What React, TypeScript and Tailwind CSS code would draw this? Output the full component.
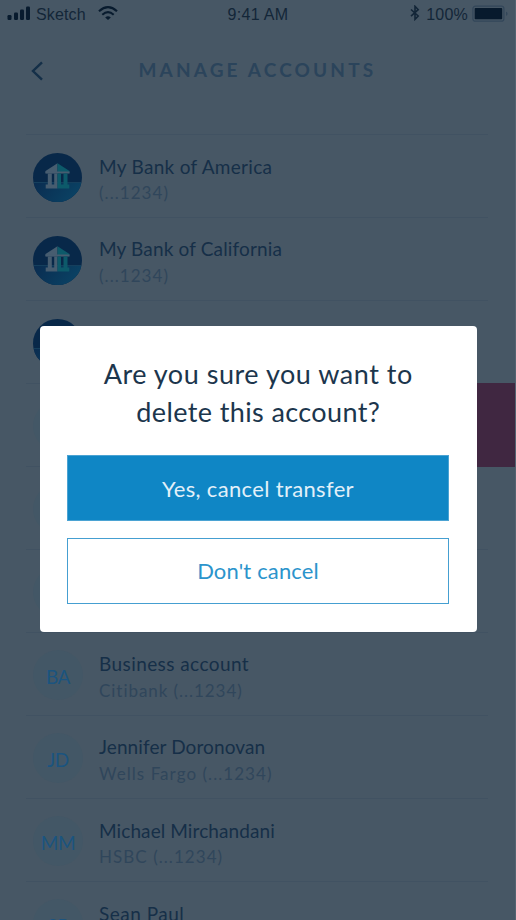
type Account = {
  id: string;
  bank?: boolean;
  initials?: string;
  name?: string;
  detail?: string;
  nameTracking?: string;
  detailTracking?: string;
  even?: boolean;
};

const accounts: Account[] = [
  { id: "america", bank: true, name: "My Bank of America", detail: "(...1234)", nameTracking: "tracking-[0.3px]", detailTracking: "tracking-[1.05px]" },
  { id: "california", bank: true, name: "My Bank of California", detail: "(...1234)", nameTracking: "tracking-[0.15px]", detailTracking: "tracking-[1.05px]", even: true },
  { id: "chase", bank: true, name: "My Chase", nameTracking: "tracking-[0.3px]" },
  { id: "row-4" },
  { id: "row-5" },
  { id: "row-6" },
  { id: "business", initials: "BA", name: "Business account", detail: "Citibank (...1234)", nameTracking: "tracking-[0.42px]", detailTracking: "tracking-[0.95px]", even: true },
  { id: "jennifer", initials: "JD", name: "Jennifer Doronovan", detail: "Wells Fargo (...1234)", nameTracking: "tracking-[0.1px]", detailTracking: "tracking-[1.05px]", even: true },
  { id: "michael", initials: "MM", name: "Michael Mirchandani", detail: "HSBC (...1234)", nameTracking: "tracking-[0.09px]", detailTracking: "tracking-[1.05px]" },
  { id: "sean", initials: "SP", name: "Sean Paul", nameTracking: "tracking-[0.5px]" },
];

function BankIcon() {
  return (
    <svg className="mt-[18px] size-[49px] shrink-0" viewBox="0 0 49 49">
      <defs>
        <clipPath id="disc"><circle cx="24.5" cy="24.5" r="24.5" /></clipPath>
        <linearGradient id="ground" x1="0" x2="1" y1="0" y2="0.3">
          <stop offset="0" stopColor="#0a2c50" />
          <stop offset="1" stopColor="#0a4264" />
        </linearGradient>
      </defs>
      <g clipPath="url(#disc)">
        <rect width="49" height="49" fill="#082849" />
        <rect y="30" width="49" height="19" fill="url(#ground)" />
        <rect y="29.3" width="49" height="0.7" fill="#1c4a66" />
        <path d="M24.5 10.3 12.5 18v2.3h12z" fill="#475d70" />
        <path d="M24.5 10.3 36.5 18v2.3h-12z" fill="#0d5a6a" />
        <path d="M12.5 18.4h24v2.2h-24z" fill="#475d70" />
        <path d="M14.8 20.6h4v10.9h-4zM21.2 20.6h3.3v10.9h-3.3zM12.7 31.4h11.8v4.2H12.7z" fill="#475d70" />
        <path d="M24.5 20.6h3.5v10.9h-3.5zM30.5 20.6h4v10.9h-4zM24.5 31.4h11.8v4.2H24.5z" fill="#0d5a6a" />
      </g>
    </svg>
  );
}

function AccountRow({ account }: { account: Account }) {
  return (
    <li className="flex h-[83px] shrink-0 border-t border-[#415262]">
      <div className="flex w-[73px] shrink-0 pl-[7px]">
        {account.bank ? (
          <BankIcon />
        ) : (
          <div className="mt-[17px] flex size-[50px] justify-center rounded-full bg-[#435766] pt-[15px] text-[19px] leading-6 tracking-[-0.4px] text-[#1b547f]">
            {account.initials}
          </div>
        )}
      </div>
      <div className={account.even ? "pt-[19px]" : "pt-[20px]"}>
        <div className={`h-6 text-[19px] leading-6 whitespace-nowrap text-[#162f48] ${account.nameTracking ?? ""}`}>{account.name}</div>
        {account.detail && (
          <div className={`text-[17px] leading-6 whitespace-nowrap text-[#30465b] ${account.detailTracking ?? ""} ${account.even ? "pt-[3px]" : "pt-[2px]"}`}>{account.detail}</div>
        )}
      </div>
    </li>
  );
}

function StatusBar() {
  return (
    <div className="grid h-7 shrink-0 grid-cols-3 items-center pr-[6px] pl-[7px] font-['Liberation_Sans',Arial,sans-serif] text-[16px] text-[#132638]">
      <div className="flex items-center">
        <svg className="-mt-[2px]" width="24" height="16" viewBox="0 0 24 16" fill="#081b2e">
          <rect x="0.5" y="10" width="4" height="5" rx="1.2" />
          <rect x="7" y="7.5" width="4" height="7.5" rx="1.2" />
          <rect x="13" y="4.5" width="4" height="10.5" rx="1.2" />
          <rect x="19" y="1.5" width="4" height="13.5" rx="1.2" />
        </svg>
        <span className="ml-[5px] pt-px tracking-[0.15px]">Sketch</span>
        <svg className="-mt-[2px] ml-[12px]" width="20" height="15" viewBox="0 0 20 15" fill="none" stroke="#081b2e">
          <path d="M1 5.2Q10-2.8 19 5.2" strokeWidth="2.2" />
          <path d="M4.3 8.7Q10 3.7 15.7 8.7" strokeWidth="2.1" />
          <path d="M10 14 7.2 11.4Q10 9.2 12.8 11.4Z" fill="#081b2e" stroke="none" />
        </svg>
      </div>
      <div className="pt-px text-center tracking-[0.3px]">9:41 AM</div>
      <div className="flex items-center justify-end">
        <svg className="-mt-[2px]" width="10" height="16" viewBox="0 0 10 16" fill="none" stroke="#132638" strokeWidth="1.6">
          <path d="M1 4.5 8.2 11 5 14.3V1.3L8.2 4.6 1 11.2" />
        </svg>
        <span className="ml-[6px] pt-px tracking-[0.2px]">100%</span>
        <svg className="-mt-px ml-[4px]" width="37" height="18" viewBox="0 0 37 18">
          <rect x="0.9" y="1.2" width="31" height="15" rx="2.5" fill="none" stroke="#33475a" strokeWidth="1.2" />
          <rect x="2.7" y="3" width="27.5" height="11.3" rx="0.8" fill="#071a2d" />
          <path d="M34 6.7v4c2-.6 2-3.4 0-4z" fill="#33475a" />
        </svg>
      </div>
    </div>
  );
}

export default function App() {
  return (
    <div className="relative flex h-[920px] w-[516px] flex-col overflow-hidden border-r border-[#536371] bg-[#475765] font-[Lato,sans-serif]">
      <StatusBar />
      <header className="flex h-[105.5px] shrink-0 pt-[28px]">
        <svg className="mt-[5px] ml-[30px]" width="14" height="20" viewBox="0 0 14 20" fill="none" stroke="#142f48" strokeWidth="2.4">
          <path d="M12 1.3 3 10l9 8.7" />
        </svg>
        <h1 className="ml-[94.5px] h-7 text-[19px] leading-7 font-bold tracking-[3.15px] whitespace-nowrap text-[#2b445b]">MANAGE ACCOUNTS</h1>
      </header>
      <ul className="mr-[27px] ml-[26px] flex flex-col">
        {accounts.map((account) => (
          <AccountRow key={account.id} account={account} />
        ))}
      </ul>
      <div className="absolute top-[383px] right-[-1px] h-[84px] w-[60px] bg-[#402741]" />
      <div role="dialog" className="absolute top-[325.5px] left-[40px] flex h-[306px] w-[436.5px] flex-col rounded-[4px] bg-white px-[27px] pt-[29.5px]">
        <h2 className="h-[100px] text-center text-[27px] leading-[38px] text-[#1c364d]">
          <span className="block tracking-[0.53px]">Are you sure you want to</span>
          <span className="block tracking-[0.38px]">delete this account?</span>
        </h2>
        <button className="h-[66px] w-[382px] shrink-0 border border-[#4ba3d3] bg-[#0f86c5] text-[22px] tracking-[0.35px] text-[#e2f0f9]">Yes, cancel transfer</button>
        <button className="mt-[17px] h-[66px] w-[382px] shrink-0 border border-[#459fd1] bg-white pb-[2px] text-[22px] tracking-[0.15px] text-[#2b94cc]">Don't cancel</button>
      </div>
    </div>
  );
}
